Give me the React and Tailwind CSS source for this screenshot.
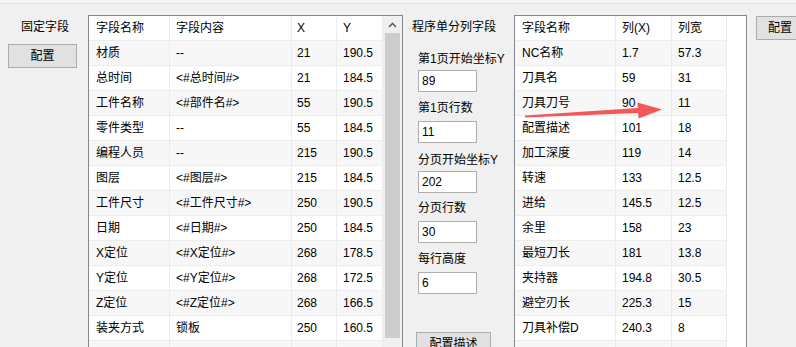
import React from 'react';

const fixedRows = [
  ['材质', '--', '21', '190.5'],
  ['总时间', '<#总时间#>', '21', '184.5'],
  ['工件名称', '<#部件名#>', '55', '190.5'],
  ['零件类型', '--', '55', '184.5'],
  ['编程人员', '--', '215', '190.5'],
  ['图层', '<#图层#>', '215', '184.5'],
  ['工件尺寸', '<#工件尺寸#>', '250', '190.5'],
  ['日期', '<#日期#>', '250', '184.5'],
  ['X定位', '<#X定位#>', '268', '178.5'],
  ['Y定位', '<#Y定位#>', '268', '172.5'],
  ['Z定位', '<#Z定位#>', '268', '166.5'],
  ['装夹方式', '锁板', '250', '160.5'],
  ['', '', '', ''],
];

const columnRows = [
  ['NC名称', '1.7', '57.3'],
  ['刀具名', '59', '31'],
  ['刀具刀号', '90', '11'],
  ['配置描述', '101', '18'],
  ['加工深度', '119', '14'],
  ['转速', '133', '12.5'],
  ['进给', '145.5', '12.5'],
  ['余里', '158', '23'],
  ['最短刀长', '181', '13.8'],
  ['夹持器', '194.8', '30.5'],
  ['避空刃长', '225.3', '15'],
  ['刀具补偿D', '240.3', '8'],
  ['', '', ''],
];

const Cell = ({ children, pl = 'pl-[6px]' }) => (
  <div className={`h-full flex items-center border-r border-[#ececec] whitespace-nowrap overflow-hidden ${pl}`}>
    {children}
  </div>
);

const Field = ({ label, value, labelMt, inputMt }) => (
  <>
    <div className={`h-[16px] leading-[16px] whitespace-nowrap ${labelMt}`}>{label}</div>
    <div className={`w-[59px] h-[22px] bg-white border border-[#adadad] flex items-center pl-[3px] ${inputMt}`}>
      {value}
    </div>
  </>
);

const App = () => {
  return (
    <div className="relative w-[796px] h-[347px] overflow-hidden bg-[#f0f0f0] text-[12px] text-black font-[family-name:'Liberation_Sans','Noto_Sans_CJK_SC',sans-serif]">
      <div className="h-[3px] bg-[#f5f5f5]" />
      <div className="flex items-start border-t border-[#e3e3e3]">
        {/* 固定字段 */}
        <div className="w-[88px] shrink-0 flex flex-col">
          <div className="mt-[15px] ml-[21px] h-[16px] leading-[16px]">固定字段</div>
          <button className="mt-[9px] ml-[8px] w-[69px] h-[24px] bg-[#e1e1e1] border border-[#adadad] flex items-center justify-center">
            配置
          </button>
        </div>

        {/* left grid */}
        <div className="mt-[11px] w-[315px] h-[340px] shrink-0 border border-[#828790] bg-white flex overflow-hidden">
          <div className="w-[294px] shrink-0">
            <div className="grid grid-cols-[81px_122px_45px_46px] h-[25px] bg-white border-b border-[#ececec]">
              <Cell pl="pl-[7px]">字段名称</Cell>
              <Cell>字段内容</Cell>
              <Cell pl="pl-[5px]">X</Cell>
              <Cell>Y</Cell>
            </div>
            {fixedRows.map((r, i) => (
              <div
                key={i}
                className={`grid grid-cols-[81px_122px_45px_46px] h-[25px] border-b border-[#ececec] ${i % 2 === 0 ? 'bg-[#f7f7f7]' : 'bg-white'}`}
              >
                <Cell pl="pl-[7px]">{r[0]}</Cell>
                <Cell>{r[1]}</Cell>
                <Cell pl="pl-[5px]">{r[2]}</Cell>
                <Cell>{r[3]}</Cell>
              </div>
            ))}
          </div>
          <div className="w-[19px] shrink-0 bg-[#f0f0f0] flex flex-col">
            <div className="h-[17px] flex items-center justify-center">
              <svg width="9" height="6" viewBox="0 0 9 6">
                <path d="M1 5 L4.5 1.5 L8 5" fill="none" stroke="#606060" strokeWidth="1.6" />
              </svg>
            </div>
            <div className="mx-[2px] h-[305px] bg-[#cdcdcd]" />
          </div>
        </div>

        {/* 程序单分列字段 */}
        <div className="w-[111px] shrink-0 flex flex-col">
          <div className="mt-[15px] ml-[9px] h-[16px] leading-[16px] whitespace-nowrap">程序单分列字段</div>
          <div className="ml-[15px] flex flex-col">
            <Field label="第1页开始坐标Y" value="89" labelMt="mt-[16px]" inputMt="mt-[3px]" />
            <Field label="第1页行数" value="11" labelMt="mt-[8px]" inputMt="mt-[5px]" />
            <Field label="分页开始坐标Y" value="202" labelMt="mt-[9px]" inputMt="mt-[3px]" />
            <Field label="分页行数" value="30" labelMt="mt-[7px]" inputMt="mt-[5px]" />
            <Field label="每行高度" value="6" labelMt="mt-[8px]" inputMt="mt-[5px]" />
            <button className="mt-[38px] -ml-[2px] w-[75px] h-[24px] bg-[#e1e1e1] border border-[#adadad] flex items-center justify-center">
              配置描述
            </button>
          </div>
        </div>

        {/* right grid */}
        <div className="mt-[11px] w-[233px] h-[340px] shrink-0 border border-[#828790] bg-white overflow-hidden">
          <div className="grid grid-cols-[101px_56px_55px] h-[25px] w-[212px] border-b border-[#ececec]">
            <Cell pl="pl-[7px]">字段名称</Cell>
            <Cell>列(X)</Cell>
            <Cell>列宽</Cell>
          </div>
          {columnRows.map((r, i) => (
            <div
              key={i}
              className={`grid grid-cols-[101px_56px_55px] h-[25px] w-[212px] border-b border-[#ececec] ${i % 2 === 0 ? 'bg-[#f7f7f7]' : 'bg-white'}`}
            >
              <Cell pl="pl-[7px]">{r[0]}</Cell>
              <Cell>{r[1]}</Cell>
              <Cell>{r[2]}</Cell>
            </div>
          ))}
        </div>

        <button className="mt-[12px] ml-[9px] w-[75px] h-[24px] shrink-0 bg-[#e1e1e1] border border-[#adadad] flex items-center pl-[11px]">
          配置
        </button>
      </div>

      {/* red annotation arrow */}
      <svg className="absolute inset-0 pointer-events-none" width="796" height="347" viewBox="0 0 796 347">
        <polygon
          points="525,115.6 637.9,108 637.4,102.5 662,109.5 638.6,118.5 638.1,113 525,117.6"
          fill="#f45757"
        />
      </svg>
    </div>
  );
};

export default App;
